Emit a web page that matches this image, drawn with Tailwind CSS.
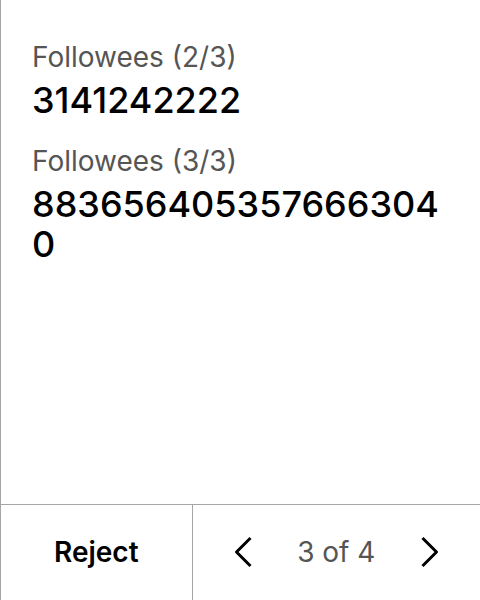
<!DOCTYPE html>
<html lang="en">
<head>
<meta charset="utf-8">
<meta name="viewport" content="width=device-width, initial-scale=1">
<title>Review transaction</title>
<script src="https://cdn.jsdelivr.net/npm/@tailwindcss/browser@4"></script>
</head>
<body class="flex min-h-screen flex-col border-l border-[#a6a6a6] bg-white font-['Inter',sans-serif] text-black">
  <main class="flex-1 pt-[39px] pr-8 pl-[31px]">
    <dl class="flex flex-col gap-[23px]">
      <div class="flex flex-col gap-[5px]">
        <dt class="text-[28px] leading-9 text-[#555555]">Followees (2/3)</dt>
        <dd class="text-[36px] leading-10 font-medium break-all">3141242222</dd>
      </div>
      <div class="flex flex-col gap-[5px]">
        <dt class="text-[28px] leading-9 text-[#555555]">Followees (3/3)</dt>
        <dd class="text-[36px] leading-10 font-medium break-all">8836564053576663040</dd>
      </div>
    </dl>
  </main>
  <footer class="flex h-24 border-t border-[#a6a6a6]">
    <button type="button" class="w-2/5 border-r border-[#a6a6a6] pb-0.5 text-[28px] font-semibold">Reject</button>
    <nav aria-label="Pages" class="flex flex-1 items-center justify-between px-8 pb-0.5">
      <button type="button" aria-label="Previous page" class="p-1">
        <svg class="size-8" viewBox="0 0 32 32" fill="none" stroke="currentColor" stroke-width="3" stroke-linejoin="round" aria-hidden="true"><path d="M21.5 2L7.5 16L21.5 30"/></svg>
      </button>
      <span class="text-[28px] text-[#555555]">3 of 4</span>
      <button type="button" aria-label="Next page" class="p-1">
        <svg class="size-8" viewBox="0 0 32 32" fill="none" stroke="currentColor" stroke-width="3" stroke-linejoin="round" aria-hidden="true"><path d="M10.5 2L24.5 16L10.5 30"/></svg>
      </button>
    </nav>
  </footer>
</body>
</html>
